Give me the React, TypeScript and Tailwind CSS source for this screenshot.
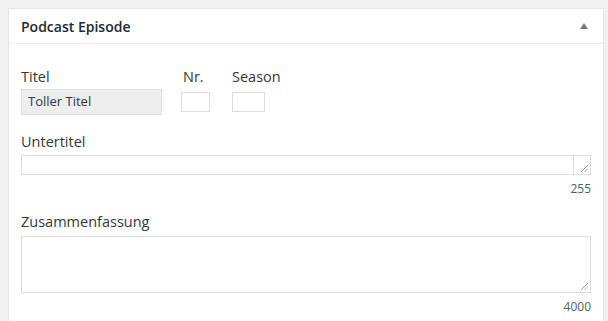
const Grip = () => (
  <svg width="8" height="8" viewBox="0 0 8 8" className="absolute right-[2px] bottom-[2px]">
    <line x1="1" y1="8" x2="8" y2="1" stroke="#888" strokeWidth="0.8" />
    <line x1="4.5" y1="8" x2="8" y2="4.5" stroke="#888" strokeWidth="0.8" />
  </svg>
);

export default function App() {
  return (
    <div className="min-h-screen bg-[#f1f1f1] pt-2 pl-2 pr-[4px] font-['Open_Sans',sans-serif] text-[#32373c]">
      <div className="border border-[#e5e5e5] bg-white h-[320px]">
        <div className="h-[35px] border-b border-[#eee] flex items-center justify-between pl-3 pr-[12px]">
          <h2 className="text-[14px] font-semibold text-[#23282d]">Podcast Episode</h2>
          <svg width="8" height="6" viewBox="0 0 8 6" className="mr-[3px]">
            <polygon points="4,0 8,6 0,6" fill="#72777c" />
          </svg>
        </div>
        <div className="px-3 pt-[23px]">
          <div className="flex">
            <div className="flex flex-col w-[141px]">
              <label className="text-[14.5px] leading-5">Titel</label>
              <div className="mt-[2px] h-[26px] bg-[#eee] border border-[#ddd] text-[13px] flex items-center pl-[6px]">
                Toller Titel
              </div>
            </div>
            <div className="flex flex-col ml-[19px]">
              <label className="text-[14.5px] leading-5 ml-[2px]">Nr.</label>
              <div className="mt-[2px] h-[26px] flex items-center">
                <div className="w-[29px] h-[20px] border border-[#ddd]" />
              </div>
            </div>
            <div className="flex flex-col ml-[22px]">
              <label className="text-[14.5px] leading-5">Season</label>
              <div className="mt-[2px] h-[26px] flex items-center">
                <div className="w-[33px] h-[20px] border border-[#ddd]" />
              </div>
            </div>
          </div>
          <div className="mt-[17px] flex flex-col">
            <label className="text-[14.5px] leading-5">Untertitel</label>
            <div className="mt-[3px] h-[20px] border border-[#ddd] relative flex justify-end">
              <div className="w-[17px] h-full border-l border-[#ddd] relative">
                <Grip />
              </div>
            </div>
            <div className="text-right text-[12px] leading-4 mt-[6px] text-[#555d66]">255</div>
          </div>
          <div className="mt-[15px] flex flex-col">
            <label className="text-[14.5px] leading-5">Zusammenfassung</label>
            <div className="mt-[4px] h-[57px] border border-[#ddd] relative">
              <Grip />
            </div>
            <div className="text-right text-[12px] leading-4 mt-[6px] text-[#555d66]">4000</div>
          </div>
        </div>
      </div>
    </div>
  );
}
